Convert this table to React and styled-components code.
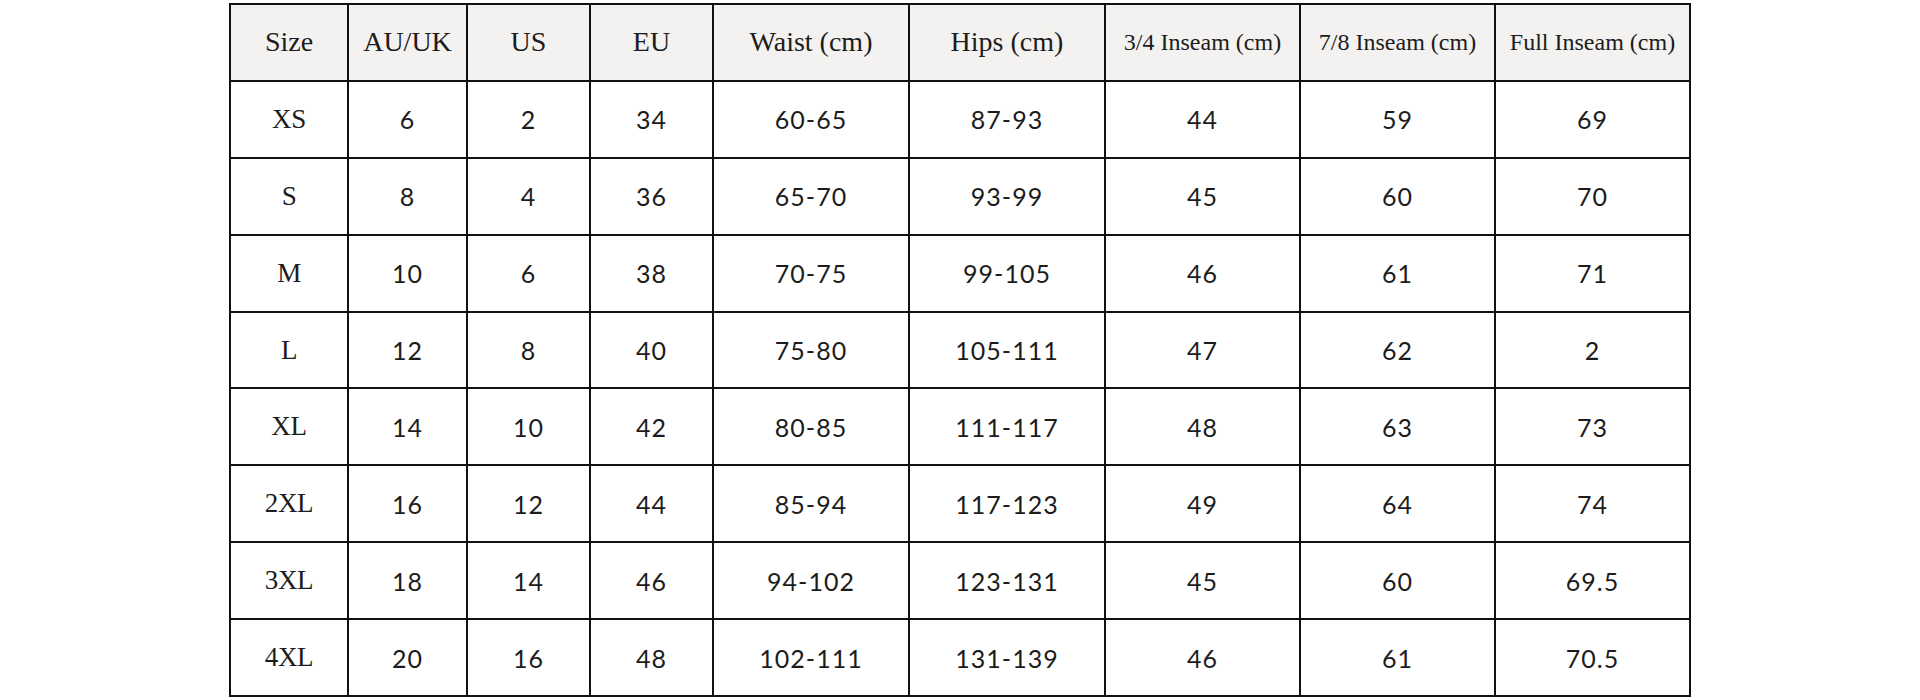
import React from "react";
import styled, { createGlobalStyle } from "styled-components";

const Global = createGlobalStyle`
  html, body { margin: 0; padding: 0; background: #ffffff; }
  body { font-family: "Lato", "Liberation Sans", sans-serif; }
`;

const Page = styled.div`
  display: flex;
  justify-content: center;
  padding-top: 3px;
`;

const Table = styled.table`
  width: 1460px;
  height: 692px;
  table-layout: fixed;
  border-collapse: collapse;
  border: 2px solid #111;
`;

const HeadCell = styled.th`
  background: #f3f2f0;
  border: 2px solid #111;
  font-family: "Liberation Serif", "Times New Roman", serif;
  font-weight: 400;
  color: #1c1c1c;
  font-size: ${(p) => (p.$small ? "24px" : "28px")};
  letter-spacing: 0;
  text-align: center;
  vertical-align: middle;
  padding: 0;
  white-space: nowrap;
`;

const Cell = styled.td`
  border: 2px solid #111;
  text-align: center;
  vertical-align: middle;
  padding: 0;
  color: #1c1c1c;
  font-family: ${(p) =>
    p.$serif
      ? `"Liberation Serif", "Times New Roman", serif`
      : `"Lato", "Liberation Sans", sans-serif`};
  font-size: ${(p) => (p.$serif ? "27px" : "25px")};
  letter-spacing: ${(p) => (p.$serif ? "-0.3px" : "1px")};
`;

const Row = styled.tr`
  height: 76.9px;
`;

const widths = [118, 119, 123, 123, 196, 196, 195, 195, 195];

const headers = [
  { t: "Size" },
  { t: "AU/UK" },
  { t: "US" },
  { t: "EU" },
  { t: "Waist (cm)" },
  { t: "Hips (cm)" },
  { t: "3/4 Inseam (cm)", small: true },
  { t: "7/8 Inseam (cm)", small: true },
  { t: "Full Inseam (cm)", small: true },
];

const rows = [
  ["XS", "6", "2", "34", "60-65", "87-93", "44", "59", "69"],
  ["S", "8", "4", "36", "65-70", "93-99", "45", "60", "70"],
  ["M", "10", "6", "38", "70-75", "99-105", "46", "61", "71"],
  ["L", "12", "8", "40", "75-80", "105-111", "47", "62", "2"],
  ["XL", "14", "10", "42", "80-85", "111-117", "48", "63", "73"],
  ["2XL", "16", "12", "44", "85-94", "117-123", "49", "64", "74"],
  ["3XL", "18", "14", "46", "94-102", "123-131", "45", "60", "69.5"],
  ["4XL", "20", "16", "48", "102-111", "131-139", "46", "61", "70.5"],
];

export default function App() {
  return (
    <>
      <Global />
      <Page>
        <Table>
          <colgroup>
            {widths.map((w, i) => (
              <col key={i} style={{ width: `${w}px` }} />
            ))}
          </colgroup>
          <thead>
            <Row>
              {headers.map((h) => (
                <HeadCell key={h.t} $small={h.small}>
                  {h.t}
                </HeadCell>
              ))}
            </Row>
          </thead>
          <tbody>
            {rows.map((r) => (
              <Row key={r[0]}>
                {r.map((v, i) => (
                  <Cell key={i} $serif={i === 0}>
                    {v}
                  </Cell>
                ))}
              </Row>
            ))}
          </tbody>
        </Table>
      </Page>
    </>
  );
}
